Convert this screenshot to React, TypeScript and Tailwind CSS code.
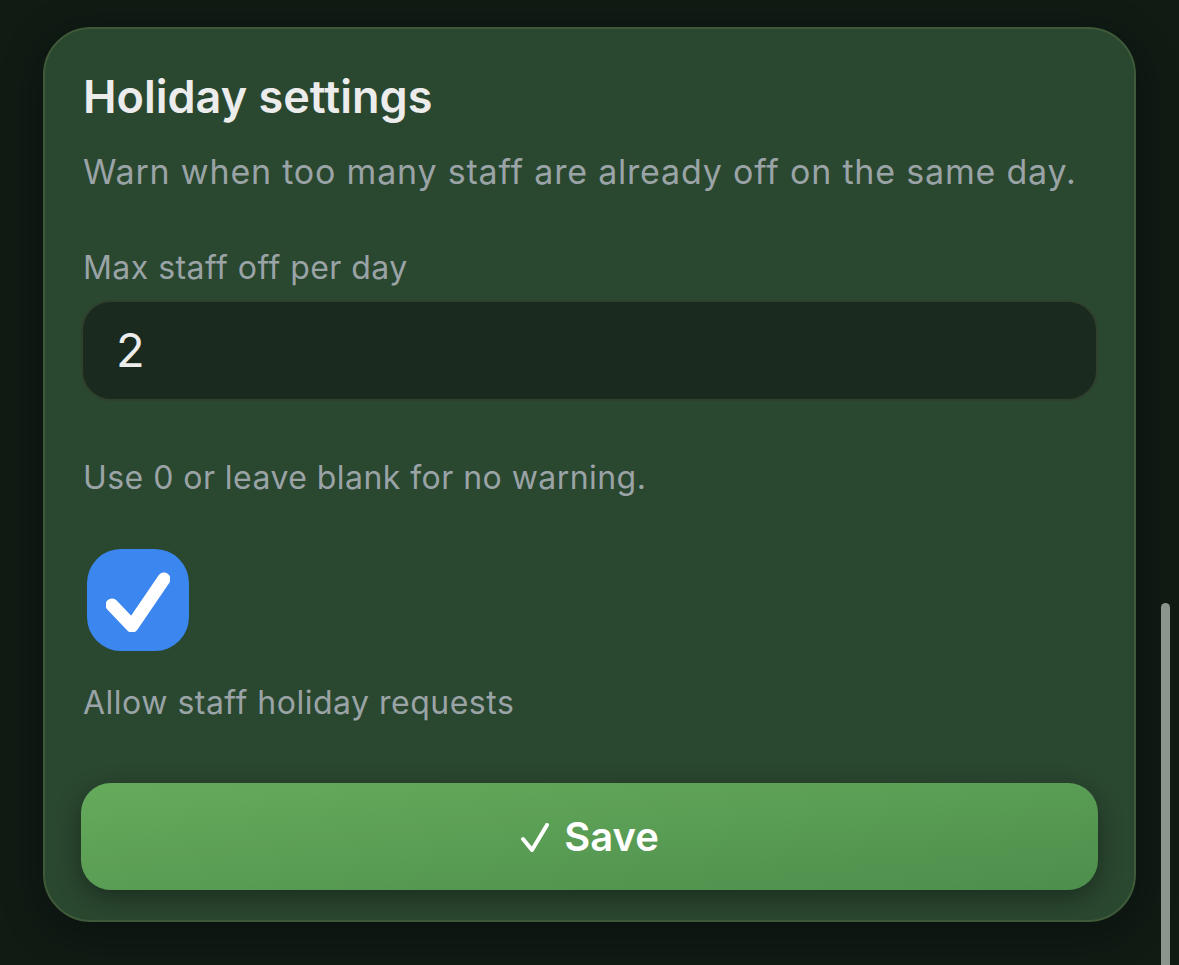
export default function App() {
  return (
    <div className="relative h-[965px] w-[1179px] overflow-hidden bg-[#101b14] font-['Inter','Noto_Sans',sans-serif]">
      <div className="pl-[43px] pt-[27px]">
        <div className="flex w-[1093px] flex-col rounded-[48px] border-2 border-[#3f5a38] bg-[#2a4730] px-[36px] pt-[42px] pb-[30px] shadow-[0_10px_40px_rgba(0,0,0,0.35)]">
          <h2 className="pl-[2px] text-[45px] leading-[52px] font-semibold text-[#ececec]">
            Holiday settings
          </h2>
          <p className="mt-[27px] pl-[2px] text-[34px] leading-[44px] tracking-[0.8px] text-[#9aa3a6]">
            Warn when too many staff are already off on the same day.
          </p>
          <label className="mt-[52px] pl-[2px] text-[32px] leading-[44px] tracking-[0.45px] text-[#9aa3a6]">
            Max staff off per day
          </label>
          <div className="mt-[10px] flex h-[101px] items-center rounded-[30px] border-2 border-[#2f412d] bg-[#1a2a1e] px-[33px] text-[47px] text-[#ececec]">
            2
          </div>
          <p className="mt-[55px] pl-[2px] text-[32px] leading-[44px] tracking-[0.45px] text-[#9aa3a6]">
            Use 0 or leave blank for no warning.
          </p>
          <div className="mt-[49px] ml-[6px] flex h-[102px] w-[102px] items-center justify-center rounded-[34px] bg-[#3b86ef]">
            <svg width="64" height="64" viewBox="0 0 64 64" fill="none">
              <path
                d="M6 37 L26 58 L58 11"
                stroke="white"
                strokeWidth="13"
                strokeLinecap="round"
                strokeLinejoin="round"
              />
            </svg>
          </div>
          <p className="mt-[30px] pl-[2px] text-[32px] leading-[44px] tracking-[0.5px] text-[#9aa3a6]">
            Allow staff holiday requests
          </p>
          <button className="mt-[58px] flex h-[107px] items-center justify-center gap-[14px] rounded-[30px] bg-linear-to-br from-[#66ab5c] to-[#4d8e4c] text-[40px] font-semibold text-white shadow-[0_8px_24px_rgba(0,0,0,0.35)]">
            <svg width="30" height="30" viewBox="0 0 30 30" fill="none" className="mt-[2px]">
              <path
                d="M3 16 L12 27 L27 2"
                stroke="white"
                strokeWidth="4"
                strokeLinecap="round"
                strokeLinejoin="round"
              />
            </svg>
            <span>Save</span>
          </button>
        </div>
      </div>
      <div className="absolute top-[603px] left-[1161px] h-[400px] w-[9px] rounded-full bg-[#8a958d]" />
    </div>
  );
}
